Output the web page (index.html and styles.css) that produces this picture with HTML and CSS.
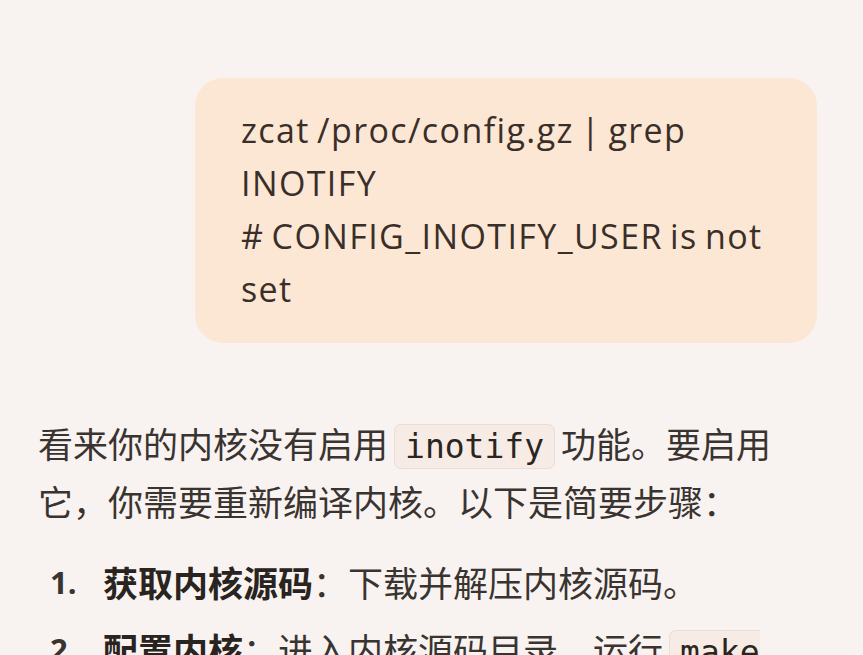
FILE: index.html
```html
<!DOCTYPE html>
<html lang="zh-CN">
<head>
<meta charset="utf-8">
<link rel="stylesheet" href="styles.css">
</head>
<body>
<div class="chat">
  <div class="user-row">
    <div class="bubble">
      <p>zcat /proc/config.gz | grep INOTIFY</p>
      <p># CONFIG_INOTIFY_USER is not set</p>
    </div>
  </div>
  <div class="answer">
    <p class="para">看来你的内核没有启用<code class="inline">inotify</code>功能。要启用它，你需要重新编译内核。以下是简要步骤：</p>
    <ol class="steps">
      <li><span class="num">1.</span><span class="body"><strong>获取内核源码</strong>：下载并解压内核源码。</span></li>
      <li><span class="num">2.</span><span class="body"><strong>配置内核</strong>：进入内核源码目录，运行<code class="inline">make menuconfig</code></span></li>
    </ol>
  </div>
</div>
</body>
</html>
```
FILE: styles.css
```css
html, body {
  margin: 0;
  padding: 0;
  background: #f8f3f0;
  height: 100%;
  overflow: hidden;
}
body {
  color: #2f2925;
  font-family: "Noto Sans CJK SC", "Open Sans", sans-serif;
}
.chat {
  padding-top: 78px;
}
.user-row {
  display: flex;
  justify-content: flex-end;
  padding-right: 46px;
}
.bubble {
  width: 622px;
  box-sizing: border-box;
  background: #fce7d5;
  border-radius: 28px;
  padding: 26px 36px 27px 46px;
  font-family: "Open Sans", sans-serif;
  font-size: 34px;
  line-height: 53px;
  color: #3a2f28;
  letter-spacing: 1.4px;
  word-spacing: -3px;
}
.bubble p {
  margin: 0;
}
.answer {
  padding: 0 60px 0 38px;
}
.para {
  margin: 73px 0 0 0;
  font-size: 35px;
  line-height: 54px;
  color: #3a3430;
}
.inline {
  font-family: "DejaVu Sans Mono", monospace;
  font-size: 33px;
  background: #f7ece5;
  border: 1px solid #eaddd3;
  border-radius: 7px;
  padding: 2px 10px;
  margin: 0 6px;
  color: #2b2521;
}
.steps {
  list-style: none;
  margin: 27px 0 0 0;
  padding: 0;
  font-size: 35px;
  line-height: 54px;
  color: #3a3430;
}
.steps li {
  display: flex;
  margin-bottom: 13px;
}
.num {
  width: 65px;
  flex: none;
  padding-left: 12px;
  box-sizing: border-box;
  font-family: "Open Sans", sans-serif;
  font-weight: 700;
  font-size: 31px;
}
.body strong {
  font-weight: 700;
  color: #2a2420;
}
```
